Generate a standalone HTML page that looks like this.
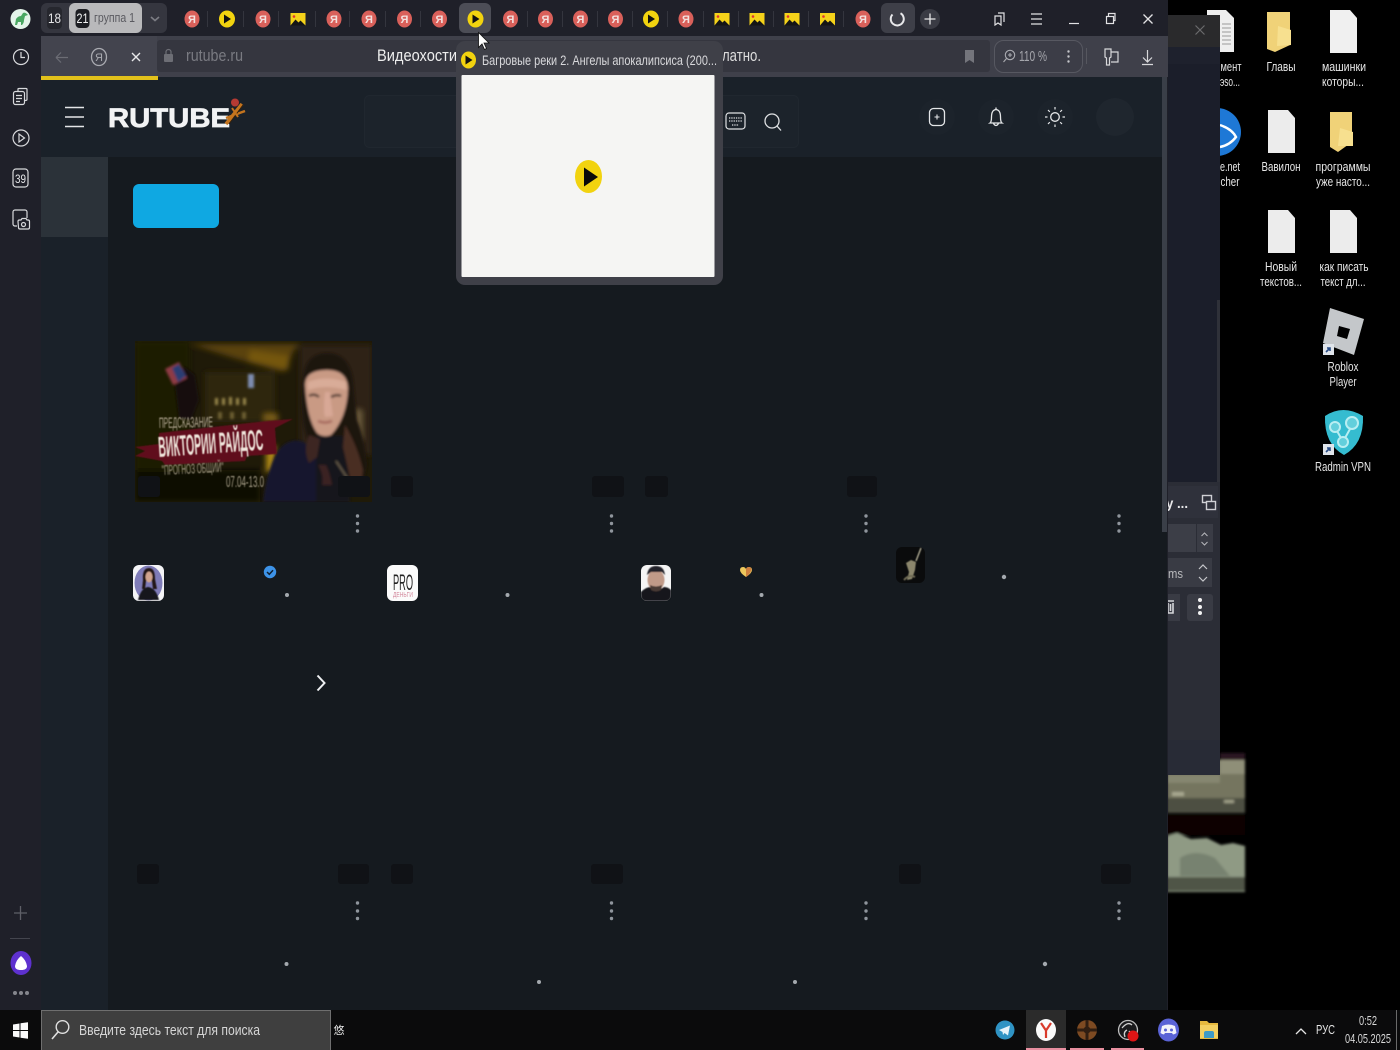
<!DOCTYPE html>
<html lang="ru">
<head>
<meta charset="utf-8">
<title>RUTUBE</title>
<style>
html,body{margin:0;padding:0;width:1400px;height:1050px;overflow:hidden;background:#000}
svg{display:block;position:absolute;left:0;top:0}
text{font-family:"Liberation Sans","Noto Sans CJK SC",sans-serif}
</style>
</head>
<body>
<svg width="1400" height="1050" viewBox="0 0 1400 1050" xmlns="http://www.w3.org/2000/svg">
<defs>
<filter id="b1"><feGaussianBlur stdDeviation="1.2"/></filter>
<filter id="b2"><feGaussianBlur stdDeviation="3"/></filter>
<filter id="b05"><feGaussianBlur stdDeviation="0.45"/></filter>
<clipPath id="thumb"><rect x="135" y="341" width="237" height="161"/></clipPath>
</defs>

<!-- desktop -->
<rect width="1400" height="1050" fill="#000"/>

<!-- desktop icons -->
<g>
<path d="M1207 10h19l8 8v34h-27z" fill="#eeeeee"/>
<g stroke="#9a9a9a"><path d="M1222 24h9M1222 28h9M1222 32h9M1222 36h9M1222 40h9M1222 44h9"/></g>
<path d="M1267 12h23v33l-15 7-8-3z" fill="#f0d278"/><path d="M1278 26l13 4v15l-14 1z" fill="#f7e08f"/>
<path d="M1330 10h20l7 8v35h-27z" fill="#f0f0f0"/>
<path d="M1268 110h20l7 8v35h-27z" fill="#ececec"/>
<path d="M1330 112h22v30l-14 10-8-5z" fill="#f0d278"/><path d="M1340 128l13 4v14h-15z" fill="#f7e08f"/>
<path d="M1268 210h20l7 8v35h-27z" fill="#ececec"/>
<path d="M1330 210h20l7 8v35h-27z" fill="#ececec"/>
<circle cx="1217" cy="132" r="24" fill="#1e78d6"/>
<path d="M1220 125q12 4 16 12q-6 8-16 10" stroke="#fff" stroke-width="2.5" fill="none"/>
<path d="M1330 308l34 11-10 36-31-12z" fill="#c4c7ca"/><path d="M1339 326l11 3-3 10-10-3z" fill="#000"/>
<rect x="1323" y="344" width="11" height="11" fill="#dfe4ea"/><path d="M1326 352l4-4M1327 348h3v3" stroke="#2a4d86" stroke-width="1.6" fill="none"/>
<path d="M1325 416q18-12 38 0q1 28-19 39q-20-11-19-39z" fill="#35bcd0"/>
<circle cx="1335" cy="427" r="5" fill="#63cfdc" stroke="#b8eef2" stroke-width="2"/>
<circle cx="1352" cy="423" r="6" fill="#63cfdc" stroke="#b8eef2" stroke-width="2"/>
<circle cx="1343" cy="442" r="5" fill="#63cfdc" stroke="#b8eef2" stroke-width="2"/>
<path d="M1337 431l4 7M1350 429l-5 9" stroke="#b8eef2" stroke-width="2"/>
<rect x="1323" y="444" width="11" height="11" fill="#dfe4ea"/><path d="M1326 452l4-4M1327 448h3v3" stroke="#2a4d86" stroke-width="1.6" fill="none"/>
</g>
<g fill="#e6e6e6" font-size="12.5" text-anchor="middle">
<text x="1231" y="71" textLength="21" lengthAdjust="spacingAndGlyphs">мент</text>
<text x="1230" y="86" textLength="20" lengthAdjust="spacingAndGlyphs">эso...</text>
<text x="1281" y="71" textLength="29" lengthAdjust="spacingAndGlyphs">Главы</text>
<text x="1344" y="71" textLength="44" lengthAdjust="spacingAndGlyphs">машинки</text>
<text x="1343" y="86" textLength="42" lengthAdjust="spacingAndGlyphs">которы...</text>
<text x="1230" y="171" textLength="20" lengthAdjust="spacingAndGlyphs">e.net</text>
<text x="1230" y="186" textLength="19" lengthAdjust="spacingAndGlyphs">cher</text>
<text x="1281" y="171" textLength="39" lengthAdjust="spacingAndGlyphs">Вавилон</text>
<text x="1343" y="171" textLength="55" lengthAdjust="spacingAndGlyphs">программы</text>
<text x="1343" y="186" textLength="54" lengthAdjust="spacingAndGlyphs">уже насто...</text>
<text x="1281" y="271" textLength="32" lengthAdjust="spacingAndGlyphs">Новый</text>
<text x="1281" y="286" textLength="42" lengthAdjust="spacingAndGlyphs">текстов...</text>
<text x="1344" y="271" textLength="49" lengthAdjust="spacingAndGlyphs">как писать</text>
<text x="1343" y="286" textLength="45" lengthAdjust="spacingAndGlyphs">текст дл...</text>
<text x="1343" y="371" textLength="31" lengthAdjust="spacingAndGlyphs">Roblox</text>
<text x="1343" y="386" textLength="27" lengthAdjust="spacingAndGlyphs">Player</text>
<text x="1343" y="471" textLength="56" lengthAdjust="spacingAndGlyphs">Radmin VPN</text>
</g>

<!-- distant video behind -->
<g filter="url(#b1)">
<rect x="1167" y="760" width="78" height="52" fill="#74755f"/>
<rect x="1220" y="753" width="25" height="7" fill="#2c1524"/>
<rect x="1220" y="760" width="25" height="14" fill="#8f8f78"/>
<rect x="1167" y="775" width="53" height="8" fill="#85866f"/>
<rect x="1167" y="798" width="78" height="15" fill="#4e4f42"/>
<rect x="1172" y="792" width="12" height="4" fill="#a8a890"/><rect x="1224" y="800" width="10" height="3" fill="#a0a088"/>
<rect x="1167" y="815" width="78" height="20" fill="#090405"/>
<path d="M1167 836l10-3 14 6 16-1 14 7 12-2 12 3v46h-78z" fill="#8f9a84"/>
<path d="M1180 858q15-10 35 0l15 18h-50z" fill="#77826f"/>
<rect x="1167" y="877" width="78" height="14" fill="#4f5446"/>
</g>

<!-- right background window -->
<rect x="1167" y="15" width="53" height="760" fill="#1b1e2a"/>
<rect x="1167" y="15" width="53" height="32" fill="#2a2a2c"/>
<path d="M1195.500 25.500l9 9M1204.500 25.500l-9 9" stroke="#6a6a6c" stroke-width="1.2"/>
<rect x="1167" y="47" width="53" height="17" fill="#1e212d"/>
<rect x="1167" y="482" width="53" height="258" fill="#2b2d36"/>
<rect x="1167" y="740" width="53" height="35" fill="#282b36"/>
<rect x="1217" y="300" width="3" height="182" fill="#2f3139"/>
<rect x="1167" y="486" width="51" height="32" fill="#2f313b"/>
<text x="1166" y="508" font-size="14" font-weight="bold" fill="#e8e8ea" textLength="22" lengthAdjust="spacingAndGlyphs">y ...</text>
<rect x="1202.500" y="495.500" width="9" height="7" fill="none" stroke="#cfd0d4" stroke-width="1.4"/>
<rect x="1206.500" y="501.500" width="9" height="8" fill="#2f313b" stroke="#cfd0d4" stroke-width="1.4"/>
<rect x="1167" y="524" width="29" height="28" fill="#3c3e47"/>
<rect x="1197" y="524" width="16" height="28" fill="#3a3c45"/>
<path d="M1201.500 536l3-3 3 3M1201.500 542l3 3 3-3" fill="none" stroke="#b6b7bb" stroke-width="1"/>
<rect x="1167" y="558" width="45" height="29" fill="#393b44"/>
<text x="1168" y="578" font-size="13" fill="#b9babd" textLength="15" lengthAdjust="spacingAndGlyphs">ms</text>
<path d="M1199 569l4-4 4 4M1199 577l4 4 4-4" fill="none" stroke="#c6c7cb" stroke-width="1.200"/>
<rect x="1167" y="594" width="13" height="27" fill="#393b44"/>
<path d="M1166 601h8M1168 603v10h5v-10M1170.500 604v7" stroke="#d6d7da" stroke-width="1.600" fill="none"/>
<rect x="1187" y="594" width="26" height="27" rx="3" fill="#393b44"/>
<circle cx="1200" cy="600" r="2" fill="#f2f2f2"/><circle cx="1200" cy="607" r="2" fill="#f2f2f2"/><circle cx="1200" cy="613" r="2" fill="#f2f2f2"/>

<!-- browser window -->
<rect x="0" y="0" width="1168" height="1010" fill="#1f2029"/>

<!-- page -->
<rect x="41" y="77" width="1127" height="933" fill="#151a1f"/>
<rect x="41" y="77" width="1122" height="80" fill="#1a2129"/>
<rect x="41" y="157" width="67" height="853" fill="#1a2129"/>
<rect x="41" y="157" width="67" height="80" fill="#2b3239"/>
<rect x="1162" y="77" width="5" height="455" fill="#3a3f48"/>
<rect x="1167" y="77" width="1" height="933" fill="#1f2029"/>

<!-- tab strip -->
<rect x="41" y="3" width="126" height="30" rx="6" fill="#35363f"/>
<rect x="47" y="7" width="15" height="22" rx="4" fill="#26272e"/>
<text x="54.500" y="23" font-size="13.500" fill="#e6e6e8" text-anchor="middle" textLength="13" lengthAdjust="spacingAndGlyphs">18</text>
<rect x="69" y="3" width="73" height="30" rx="6" fill="#b9b9bb"/>
<rect x="75.500" y="9" width="14" height="19" rx="4" fill="#1d1e23"/>
<text x="82.500" y="23" font-size="13.500" fill="#f2f2f2" text-anchor="middle" textLength="12" lengthAdjust="spacingAndGlyphs">21</text>
<text x="94" y="22" font-size="13" fill="#5a5a60" textLength="41" lengthAdjust="spacingAndGlyphs">группа 1</text>
<path d="M151 17l4 3.500 4-3.500" fill="none" stroke="#7c7d84" stroke-width="1.600"/>

<g stroke="#34353e" stroke-width="1">
<path d="M207.500 11v16M243.500 11v16M278.500 11v16M315.500 11v16M349.500 11v16M385.500 11v16M420.500 11v16M527.500 11v16M562.500 11v16M597.500 11v16M632.500 11v16M667.500 11v16M703.500 11v16M738.500 11v16M773.500 11v16M808.500 11v16M843.500 11v16"/>
</g>
<rect x="459" y="3" width="32" height="30" rx="6" fill="#4c4d56"/>
<rect x="881" y="3" width="34" height="30" rx="6" fill="#3e3f48"/>

<!-- Я favicons -->
<g fill="#f2e0de" font-size="11" font-weight="bold" text-anchor="middle">
<ellipse cx="192" cy="19" rx="7.500" ry="8.500" fill="#d9605a"/><text x="192" y="23">Я</text>
<ellipse cx="263" cy="19" rx="7.500" ry="8.500" fill="#d9605a"/><text x="263" y="23">Я</text>
<ellipse cx="334" cy="19" rx="7.500" ry="8.500" fill="#d9605a"/><text x="334" y="23">Я</text>
<ellipse cx="369" cy="19" rx="7.500" ry="8.500" fill="#d9605a"/><text x="369" y="23">Я</text>
<ellipse cx="404.500" cy="19" rx="7.500" ry="8.500" fill="#d9605a"/><text x="404.500" y="23">Я</text>
<ellipse cx="439.500" cy="19" rx="7.500" ry="8.500" fill="#d9605a"/><text x="439.500" y="23">Я</text>
<ellipse cx="510.500" cy="19" rx="7.500" ry="8.500" fill="#d9605a"/><text x="510.500" y="23">Я</text>
<ellipse cx="545.500" cy="19" rx="7.500" ry="8.500" fill="#d9605a"/><text x="545.500" y="23">Я</text>
<ellipse cx="580.500" cy="19" rx="7.500" ry="8.500" fill="#d9605a"/><text x="580.500" y="23">Я</text>
<ellipse cx="615.500" cy="19" rx="7.500" ry="8.500" fill="#d9605a"/><text x="615.500" y="23">Я</text>
<ellipse cx="686" cy="19" rx="7.500" ry="8.500" fill="#d9605a"/><text x="686" y="23">Я</text>
<ellipse cx="863" cy="19" rx="7.500" ry="8.500" fill="#d9605a"/><text x="863" y="23">Я</text>
</g>
<!-- play favicons -->
<ellipse cx="227" cy="19" rx="8" ry="8.500" fill="#f2d30f"/><path d="M224 14.500l7 4.500-7 4.500z" fill="#111"/>
<ellipse cx="475.500" cy="19" rx="8" ry="8.500" fill="#f2d30f"/><path d="M472.500 14.500l7 4.500-7 4.500z" fill="#111"/>
<ellipse cx="651" cy="19" rx="8" ry="8.500" fill="#f2d30f"/><path d="M648 14.500l7 4.500-7 4.500z" fill="#111"/>
<!-- image favicons -->
<g>
<rect x="290.500" y="13" width="15" height="12.500" fill="#f5d21a"/><path d="M290.500 25.500l5-6 3 3 2-2 5 5z" fill="#151515"/><circle cx="294" cy="16.500" r="1.300" fill="#d33"/>
<rect x="714.500" y="13" width="15" height="12.500" fill="#f5d21a"/><path d="M714.500 25.500l5-6 3 3 2-2 5 5z" fill="#151515"/><circle cx="718" cy="16.500" r="1.300" fill="#d33"/>
<rect x="749.500" y="13" width="15" height="12.500" fill="#f5d21a"/><path d="M749.500 25.500l5-6 3 3 2-2 5 5z" fill="#151515"/><circle cx="753" cy="16.500" r="1.300" fill="#d33"/>
<rect x="784.500" y="13" width="15" height="12.500" fill="#f5d21a"/><path d="M784.500 25.500l5-6 3 3 2-2 5 5z" fill="#151515"/><circle cx="788" cy="16.500" r="1.300" fill="#d33"/>
<rect x="820" y="13" width="15" height="12.500" fill="#f5d21a"/><path d="M820 25.500l5-6 3 3 2-2 5 5z" fill="#151515"/><circle cx="823.500" cy="16.500" r="1.300" fill="#d33"/>
</g>
<!-- spinner -->
<path d="M892.500 14.500a6.500 6.500 0 1 0 8 -1.200" fill="none" stroke="#e8e8ea" stroke-width="2"/>
<circle cx="930" cy="19" r="10" fill="#3a3b44"/>
<path d="M930 13.500v11M924.500 19h11" stroke="#e6e6e8" stroke-width="1.300"/>

<!-- window controls -->
<g fill="none" stroke="#e2e2e4" stroke-width="1.200">
<path d="M998 16h-3v9l3-2 3 2v-9zM998 13h6v9"/>
<path d="M1031 14h11M1031 19h11M1031 24h11"/>
<path d="M1069 23.500h10"/>
<rect x="1106.500" y="16.500" width="7" height="7"/><path d="M1108.500 16v-2.500h6.500v7h-1.500"/>
<path d="M1143.500 14.500l9 9M1152.500 14.500l-9 9" stroke-width="1.300"/>
</g>

<!-- toolbar -->
<path d="M41 77V43q0-7 7-7h1120v41z" fill="#3f404a"/>
<rect x="157" y="40" width="833" height="32" rx="3" fill="#35363f"/>
<rect x="41" y="76" width="117" height="4" fill="#e3c21b"/>
<rect x="41" y="36" width="116" height="40" fill="#43444e"/>
<path d="M56 57.500h12M56 57.500l5-5M56 57.500l5 5" fill="none" stroke="#6c6d75" stroke-width="1.200"/>
<ellipse cx="99" cy="57" rx="7.500" ry="8.500" fill="none" stroke="#a9aab0" stroke-width="1.300"/>
<text x="99" y="61" font-size="11" fill="#a9aab0" text-anchor="middle">Я</text>
<path d="M132 53l8 8M140 53l-8 8" stroke="#e8e8ea" stroke-width="1.400"/>
<rect x="164" y="54" width="9" height="8" rx="1" fill="#6d6e75"/>
<path d="M166 54v-2a2.500 2.500 0 0 1 5 0v2" fill="none" stroke="#6d6e75" stroke-width="1.200"/>
<text x="186" y="61" font-size="17" fill="#7a7b82" textLength="57" lengthAdjust="spacingAndGlyphs">rutube.ru</text>
<text x="377" y="61" font-size="17" fill="#eeeeee" textLength="80" lengthAdjust="spacingAndGlyphs">Видеохости</text>
<text x="722" y="61" font-size="17" fill="#dddddd" textLength="39" lengthAdjust="spacingAndGlyphs">латно.</text>
<path d="M965 50h9v13l-4.500-3-4.500 3z" fill="#74757c"/>
<rect x="994.500" y="40.500" width="88" height="32" rx="9" fill="#3c3d47" stroke="#575861"/>
<circle cx="1010" cy="55" r="4.700" fill="none" stroke="#a9aab0" stroke-width="1.100"/>
<path d="M1006.500 58.500l-3 3.500M1010 53v4M1008 55h4" stroke="#a9aab0" stroke-width="1.100"/>
<text x="1019" y="61" font-size="15" fill="#a5a6ac" textLength="28" lengthAdjust="spacingAndGlyphs">110 %</text>
<circle cx="1068.500" cy="51.500" r="1.200" fill="#c5c6ca"/><circle cx="1068.500" cy="56.500" r="1.200" fill="#c5c6ca"/><circle cx="1068.500" cy="61.500" r="1.200" fill="#c5c6ca"/>
<path d="M1086.500 48v16" stroke="#56575f"/>
<g fill="none" stroke="#d8d8db" stroke-width="1.200">
<path d="M1105 49h6v8l-1.500 1v7h-3v-7l-1.500-1zM1111 52h7v10h-7"/>
<path d="M1147.500 50v12M1143 57.500l4.500 4.500 4.500-4.500M1142 64.500h11"/>
</g>

<!-- rutube header -->
<path d="M65 107.500h19M65 117h19M65 126.500h19" stroke="#e4e6e8" stroke-width="1.500"/>
<text x="108" y="127" font-size="27" font-weight="bold" fill="#f2f3f4" stroke="#f2f3f4" stroke-width=".7" textLength="122" lengthAdjust="spacingAndGlyphs">RUTUBE</text>
<g>
<path d="M226 124l16-20" stroke="#c4741e" stroke-width="3.500"/>
<path d="M226 118l19-7" stroke="#c4741e" stroke-width="2.500"/>
<path d="M229 124l14-19" stroke="#33200c" stroke-width="1"/>
<path d="M232 108l6 9" stroke="#c4741e" stroke-width="2"/>
<circle cx="235" cy="102.500" r="4" fill="#b53a33"/>
</g>
<rect x="364.500" y="95.500" width="434" height="52" rx="5" fill="#1c232b" stroke="#20272f"/>
<rect x="726" y="113" width="19" height="16" rx="3" fill="none" stroke="#dfe1e3" stroke-width="1.200"/>
<path d="M729 118h13M729 121h13M732 125h7" stroke="#dfe1e3" stroke-dasharray="1.300 1" stroke-width="1.300"/>
<circle cx="772" cy="121" r="7" fill="none" stroke="#dfe1e3" stroke-width="1.300"/>
<path d="M777 126l4 4.500" stroke="#dfe1e3" stroke-width="1.300"/>
<circle cx="937" cy="117" r="18" fill="#1c232b"/>
<circle cx="996" cy="117" r="18" fill="#1c232b"/>
<circle cx="1055" cy="117" r="18" fill="#1c232b"/>
<circle cx="1115" cy="117" r="19" fill="#1f262e"/>
<rect x="929.500" y="108.500" width="15" height="17" rx="4" fill="none" stroke="#e4e6e8" stroke-width="1.300"/>
<path d="M937 114.500v5M934.500 117h5" stroke="#e4e6e8" stroke-width="1.100"/>
<path d="M990 123q1.500-1 1.500-6q0-7 4.500-7.500q4.500 .5 4.500 7.500q0 5 1.500 6zM993.500 123.500q2.500 4 5 0M996 107.500v2" fill="none" stroke="#e4e6e8" stroke-width="1.300"/>
<circle cx="1055" cy="117" r="4.300" fill="none" stroke="#e4e6e8" stroke-width="1.300"/>
<path d="M1055 107v2.500M1055 124.500v2.500M1045 117h2.500M1062.500 117h2.500M1048 110l1.800 1.800M1060.200 122.200l1.800 1.800M1048 124l1.800-1.800M1060.200 111.800l1.800-1.800" stroke="#e4e6e8" stroke-width="1.200"/>

<!-- blue button -->
<rect x="133" y="184" width="86" height="44" rx="6" fill="#0fa8e2"/>

<!-- thumbnail -->
<g clip-path="url(#thumb)">
<rect x="135" y="341" width="237" height="161" fill="#1f1a08"/>
<g filter="url(#b2)">
<rect x="135" y="341" width="55" height="161" fill="#1a1a06"/>
<path d="M190 344h110l-6 6 -10 22-50-14z" fill="#5a4210"/>
<path d="M250 350l40 6-2 14-40-8z" fill="#75560f"/>
<rect x="205" y="372" width="70" height="50" fill="#2f270c"/>
<rect x="300" y="345" width="72" height="110" fill="#2d2012"/>
<rect x="266" y="446" width="10" height="26" fill="#b08a18"/>
<rect x="264" y="414" width="14" height="8" fill="#7b5f14"/>
<rect x="135" y="470" width="125" height="32" fill="#0f0d06"/>
<rect x="352" y="410" width="10" height="30" fill="#6b5a3a"/>
</g>
<g filter="url(#b1)">
<path d="M175 385l-5-12 15-6 10 8 4 25-8 20-12-2z" fill="#12110d"/>
<path d="M165 369l14-7 8 16-14 7z" fill="#8e3a44"/><path d="M172 368l7-4 7 12-8 6z" fill="#2b3c73"/>
<rect x="248" y="374" width="6" height="14" fill="#7d8cb0"/>
<g fill="#9c8a4e"><rect x="215" y="398" width="3" height="7"/><rect x="222" y="398" width="3" height="7"/><rect x="229" y="397" width="3" height="8"/><rect x="236" y="398" width="3" height="7"/><rect x="243" y="398" width="3" height="7"/></g>
<g fill="#6d5f30"><rect x="218" y="412" width="4" height="7"/><rect x="230" y="412" width="4" height="7"/><rect x="242" y="412" width="4" height="7"/></g>
<!-- woman -->
<path d="M303 380q2-27 24-27q22 0 26 27l4 40q8 20 10 45l-4 22h-58l2-50q-8-25-4-57z" fill="#1e1411"/>
<path d="M263 502q4-32 14-50q10-14 24-11l16 8 4 53z" fill="#16172e"/>
<path d="M316 436h30l4 66h-34z" fill="#17121a"/>
<path d="M345 425q12 20 18 45l-2 15-10-3-8-35z" fill="#4a2e24"/>
<path d="M309 435q-6 15 0 28l8-6 3-18z" fill="#3c2620"/>
<path d="M318 465q6 10 4 20l10 0q-2-12-6-20z" fill="#3a2420"/>
<path d="M305 385q0-15 22-15q20 0 21 18q-1 30-17 47q-8 3-14-2q-10-14-12-48z" fill="#c99a84"/>
<path d="M308 382q18-7 38 0l0 8q-20-6-38 0z" fill="#d9ac98"/>
<path d="M325 392q-2 18 0 25l8-1q-2-12-3-24z" fill="#d8a896"/>
<path d="M309 396q5-3 10 1M331 397q6-3 10-1" stroke="#44302a" stroke-width="2.400" fill="none"/>
<path d="M318 421q7 3 14 0" stroke="#a4665c" stroke-width="2.400" fill="none"/>
<path d="M336 461l16 24" stroke="#8a7d60" stroke-width="1"/><circle cx="351" cy="484" r="3" fill="#7d7258"/>
</g>
<g filter="url(#b05)">
<path d="M135 447l24-3 0-11 108-12 26-2-18 9 2 26-30 2-2 5-80 4-3-4-27-5 10-5z" fill="#61101f"/>
</g>
<g filter="url(#b05)">
<text x="159" y="428" font-size="15" fill="#b3a893" textLength="54" lengthAdjust="spacingAndGlyphs" transform="rotate(-1 159 428)">ПРЕДСКАЗАНИЕ</text>
<text x="159" y="457" font-size="29" font-weight="bold" fill="#f0e6dc" textLength="105" lengthAdjust="spacingAndGlyphs" transform="rotate(-4 159 457)">ВИКТОРИИ РАЙДОС</text>
<text x="162" y="475" font-size="14" fill="#a59c86" textLength="62" lengthAdjust="spacingAndGlyphs" transform="rotate(-3 162 475)">"ПРОГНОЗ ОБЩИЙ"</text>
<text x="226" y="487" font-size="16" fill="#a59c86" textLength="38" lengthAdjust="spacingAndGlyphs">07.04-13.0</text>
</g>
</g>

<!-- dark placeholders -->
<g fill="#101216">
<rect x="138" y="476" width="22" height="21" rx="3"/>
<rect x="338" y="476" width="32" height="21" rx="3"/>
<rect x="391" y="476" width="22" height="21" rx="3"/>
<rect x="592" y="476" width="32" height="21" rx="3"/>
<rect x="645" y="476" width="23" height="21" rx="3"/>
<rect x="847" y="476" width="30" height="21" rx="3"/>
<rect x="137" y="864" width="22" height="20" rx="3"/>
<rect x="338" y="864" width="31" height="20" rx="3"/>
<rect x="391" y="864" width="22" height="20" rx="3"/>
<rect x="591" y="864" width="32" height="20" rx="3"/>
<rect x="899" y="864" width="22" height="20" rx="3"/>
<rect x="1101" y="864" width="30" height="20" rx="3"/>
</g>

<!-- kebab menus -->
<g fill="#8f959c">
<circle cx="357.500" cy="516" r="1.700"/><circle cx="357.500" cy="523.500" r="1.700"/><circle cx="357.500" cy="531" r="1.700"/>
<circle cx="611.500" cy="516" r="1.700"/><circle cx="611.500" cy="523.500" r="1.700"/><circle cx="611.500" cy="531" r="1.700"/>
<circle cx="866" cy="516" r="1.700"/><circle cx="866" cy="523.500" r="1.700"/><circle cx="866" cy="531" r="1.700"/>
<circle cx="1119" cy="516" r="1.700"/><circle cx="1119" cy="523.500" r="1.700"/><circle cx="1119" cy="531" r="1.700"/>
<circle cx="357.500" cy="903" r="1.700"/><circle cx="357.500" cy="911" r="1.700"/><circle cx="357.500" cy="918.500" r="1.700"/>
<circle cx="611.500" cy="903" r="1.700"/><circle cx="611.500" cy="911" r="1.700"/><circle cx="611.500" cy="918.500" r="1.700"/>
<circle cx="866" cy="903" r="1.700"/><circle cx="866" cy="911" r="1.700"/><circle cx="866" cy="918.500" r="1.700"/>
<circle cx="1119" cy="903" r="1.700"/><circle cx="1119" cy="911" r="1.700"/><circle cx="1119" cy="918.500" r="1.700"/>
</g>
<!-- single dots -->
<g fill="#a4a9ae">
<circle cx="287" cy="595" r="2"/><circle cx="507.500" cy="595" r="2"/><circle cx="761.500" cy="595" r="2"/><circle cx="1004" cy="577" r="2.200"/>
<circle cx="286.500" cy="964" r="2"/><circle cx="539" cy="982" r="2"/><circle cx="795" cy="982" r="2"/><circle cx="1045" cy="964" r="2.200"/>
</g>

<!-- avatars -->
<rect x="133" y="565" width="31" height="36" rx="6" fill="#f4f4f6"/>
<ellipse cx="148.500" cy="583" rx="14" ry="17.500" fill="#7f7cb8"/>
<g filter="url(#b05)">
<path d="M138 600q3-12 10-13q8 1 11 13z" fill="#17141e"/>
<path d="M143 580q-1-12 6-12q6 0 6 11l2 10h-4l-1-8h-6l-1 8h-3z" fill="#241818"/>
<ellipse cx="149" cy="577" rx="3.500" ry="5.500" fill="#d1a48e"/>
</g>
<rect x="387" y="565" width="31" height="36" rx="6" fill="#fbfbfb"/>
<text x="403" y="590" font-size="22" fill="#222" text-anchor="middle" textLength="20" lengthAdjust="spacingAndGlyphs">PRO</text>
<text x="403" y="597" font-size="7" fill="#d48a9e" text-anchor="middle" textLength="20" lengthAdjust="spacingAndGlyphs">ДЕНЬГИ</text>
<rect x="641" y="565" width="30" height="36" rx="6" fill="#f5f5f5"/>
<g filter="url(#b05)">
<path d="M641 592q6-6 12-5l5 4 6-4q4 0 7 3v5q0 6-6 6h-18q-6 0-6-6z" fill="#12141a"/>
<ellipse cx="656" cy="580" rx="8.500" ry="10.500" fill="#c09a88"/>
<path d="M647 575q1-9 9-9q8 0 9 9l-3-3h-11z" fill="#24242a"/>
<path d="M650 585q6 3 12 0l-1 5q-5 3-10 0z" fill="#4a3a36"/>
</g>
<rect x="896" y="547" width="29" height="36" rx="6" fill="#0a0b0c"/>
<g filter="url(#b05)"><path d="M906 563l5-3 5 2-1 8-3 9-5 1 2-8z" fill="#8b866c"/><path d="M916 561l5-13" stroke="#a4a08a" stroke-width="1.500"/><path d="M904 580q5-6 11-3" stroke="#6e6a55" stroke-width="2" fill="none"/></g>
<circle cx="270" cy="572" r="6.200" fill="#3d93e8"/>
<path d="M267 572l2.300 2.300 3.700-4" fill="none" stroke="#102030" stroke-width="1.500"/>
<path d="M746 577q-6-4-6-7q0-3 3-3q2 0 3 2q1-2 3-2q3 0 3 3q0 3-6 7z" fill="#edc75c"/>
<path d="M746 577q3-2 4.500-5l1-2q0-3-3-3q-2 0-2.500 2z" fill="#d0803f"/>
<path d="M317.500 675.500l7 7.500-7 7.500" fill="none" stroke="#eef0f2" stroke-width="2"/>

<!-- sidebar icons -->
<circle cx="20.500" cy="19" r="10" fill="#e4f5ea"/>
<path d="M15 25l1-6q2-3 5-3l2-3q2-1 4 1l1 1-3 1-1 4q0 3-2 5h-1l0-3h-3l-1 3z" fill="#4aa862"/>
<g fill="none" stroke="#d8d9dc" stroke-width="1.200">
<circle cx="21" cy="57" r="7.500"/><path d="M21 52v5.500h4"/>
<rect x="13.500" y="91.500" width="11" height="13" rx="2"/><path d="M16 95.500h6M16 98.500h6M16 101.500h4M18 91v-2q0-.5 1-.5h7q1 0 1 1v10q0 1-2 1"/>
<circle cx="21" cy="138" r="8"/><path d="M19 134l5.500 4-5.500 4z"/>
<rect x="13" y="169" width="15" height="18" rx="3"/>
<path d="M17 226h-2a2 2 0 0 1-2-2v-12a2 2 0 0 1 2-2h10a2 2 0 0 1 2 2v6"/>
<path d="M18 221.500q0-1.500 1.500-1.500h1.500l1-1.500h4l1 1.500h1q1.500 0 1.500 1.500v6q0 1.500-1.500 1.500h-8q-1.500 0-1.500-1.500z"/><circle cx="23.500" cy="224.500" r="2"/>
</g>
<text x="20.500" y="183" font-size="12" fill="#e6e7e9" text-anchor="middle" textLength="11" lengthAdjust="spacingAndGlyphs">39</text>
<path d="M20.500 906v14M14 913h13" stroke="#5e5f67" stroke-width="1.300"/>
<path d="M10 938.500h20" stroke="#44454e"/>
<ellipse cx="21" cy="963" rx="10.500" ry="12" fill="#5e31cf"/>
<path d="M21 956q5 4 6 10q0 4-6 4q-6 0-6-4q1-6 6-10z" fill="#fff"/>
<circle cx="15" cy="993" r="2" fill="#85868d"/><circle cx="21" cy="993" r="2" fill="#85868d"/><circle cx="27" cy="993" r="2" fill="#85868d"/>

<!-- tab preview popup -->
<rect x="456" y="41" width="267" height="244" rx="9" fill="#3f4048"/>
<rect x="461.500" y="75" width="253" height="202" rx="1" fill="#f5f5f3"/>
<ellipse cx="468.500" cy="60" rx="7.500" ry="8.500" fill="#f2d30f"/><path d="M465.500 55.500l7 4.500-7 4.500z" fill="#111"/>
<text x="482" y="65" font-size="14" fill="#d9d9dc" textLength="235" lengthAdjust="spacingAndGlyphs">Багровые реки 2. Ангелы апокалипсиса (200...</text>
<ellipse cx="588.500" cy="176.500" rx="13.500" ry="16.500" fill="#f2d30f"/>
<path d="M584 167.500l14 9.500-14 9.500z" fill="#0a0a0a"/>

<!-- cursor -->
<path d="M478.500 32.500v15l3.500-3.500 2.500 5.500 2-1-2.500-5.500h5z" fill="#fff" stroke="#111" stroke-width=".8"/>

<!-- taskbar -->
<rect x="0" y="1010" width="1400" height="40" fill="#0b0b0c"/>
<g fill="#fafafa">
<path d="M13 1024.500l6.500-1v6.500H13zM20.500 1023.300l7.500-1.100v7.800h-7.500zM13 1031h6.500v6.500l-6.500-1zM20.500 1031H28v7.800l-7.500-1.100z"/>
</g>
<rect x="41.500" y="1010.500" width="289" height="40" fill="#3f3f3f" stroke="#6f6f6f"/>
<circle cx="62.500" cy="1027" r="6.300" fill="none" stroke="#e0e0e0" stroke-width="1.400"/>
<path d="M58 1032l-6 7" stroke="#e0e0e0" stroke-width="1.600"/>
<text x="79" y="1035" font-size="15" fill="#d6d6d6" textLength="181" lengthAdjust="spacingAndGlyphs">Введите здесь текст для поиска</text>
<text x="339" y="1034" font-size="11" fill="#e8e8e8" text-anchor="middle">悠</text>

<circle cx="1005" cy="1030" r="9.500" fill="#2f93c4"/>
<path d="M999 1030l11-4.500-2 10-3.500-2.500-1.500 2-.5-3z" fill="#e6f3fa"/>
<rect x="1026" y="1010" width="40" height="40" fill="#2b2b2b"/>
<ellipse cx="1046" cy="1030" rx="10" ry="11" fill="#fafafa"/>
<path d="M1041 1023l5 7.500 5-7.500M1046 1030v8" fill="none" stroke="#d93a2b" stroke-width="2.200"/>
<circle cx="1087" cy="1030" r="10" fill="#7d4a22"/>
<path d="M1087 1020v20M1077 1030h20" stroke="#301e12" stroke-width="3"/>
<circle cx="1087" cy="1030" r="3.500" fill="#301e12"/>
<circle cx="1128" cy="1030" r="9.500" fill="#1a1a1c" stroke="#bdbdbd" stroke-width="1.300"/>
<path d="M1122 1028q6-7 10-3M1125 1037q-2-5 2-7M1135 1033q-4 1-6-2" fill="none" stroke="#d0d0d0" stroke-width="1.300"/>
<circle cx="1133" cy="1036" r="5.500" fill="#e01515"/>
<ellipse cx="1168.500" cy="1030" rx="10.500" ry="11.500" fill="#5a63d6"/>
<path d="M1162 1026q6.500-3 13 0l1.500 7q-2 1.500-3.500 1.500l-1-1.500h-7l-1 1.500q-1.500 0-3.500-1.500z" fill="#f2f2fa"/>
<circle cx="1165.500" cy="1030" r="1.500" fill="#5a63d6"/><circle cx="1171.500" cy="1030" r="1.500" fill="#5a63d6"/>
<path d="M1200 1021h7l2 2h9v16h-18z" fill="#e6b93e"/>
<rect x="1200" y="1025" width="18" height="13" fill="#f3d061"/>
<path d="M1204 1038v-5q0-2 2-2h6q2 0 2 2v5z" fill="#3f9bc7"/>
<rect x="1026" y="1048" width="40" height="2" fill="#e88fa0"/>
<rect x="1070" y="1048" width="34" height="2" fill="#e88fa0"/>
<rect x="1111" y="1048" width="33" height="2" fill="#e88fa0"/>
<path d="M1296 1034l5-5 5 5" fill="none" stroke="#e6e6e6" stroke-width="1.300"/>
<text x="1316" y="1034" font-size="13" fill="#e6e6e6" textLength="19" lengthAdjust="spacingAndGlyphs">РУС</text>
<text x="1368" y="1025" font-size="13" fill="#d8d8d8" text-anchor="middle" textLength="18" lengthAdjust="spacingAndGlyphs">0:52</text>
<text x="1368" y="1043" font-size="13" fill="#d8d8d8" text-anchor="middle" textLength="46" lengthAdjust="spacingAndGlyphs">04.05.2025</text>
<rect x="1396" y="1010" width="1" height="40" fill="#6a6a6a"/>
</svg>
</body>
</html>
